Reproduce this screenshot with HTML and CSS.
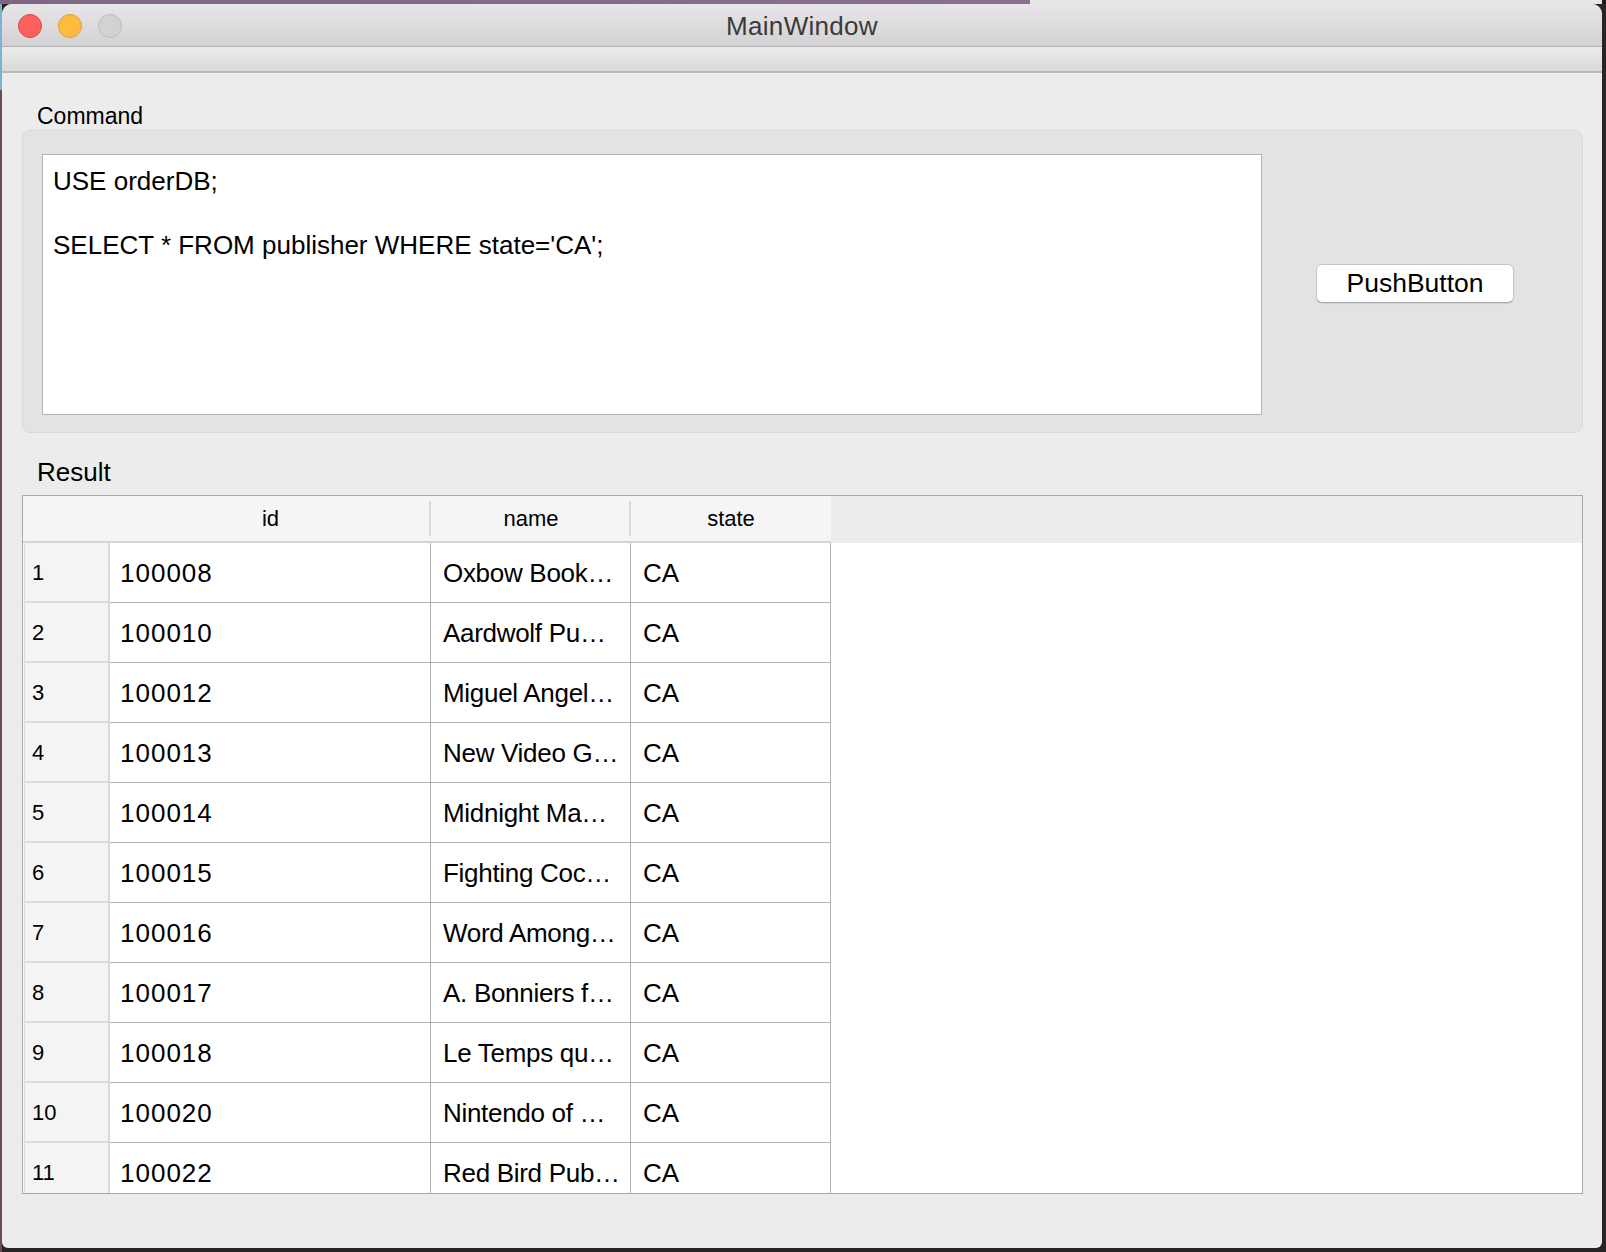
FILE: index.html
```html
<!DOCTYPE html>
<html lang="en">
<head>
<meta charset="utf-8">
<title>MainWindow</title>
<link rel="stylesheet" href="styles.css">
</head>
<body>
<div class="window">
  <div class="titlebar">
    <div class="lights">
      <span class="light red"></span>
      <span class="light yellow"></span>
      <span class="light gray"></span>
    </div>
    <div class="title">MainWindow</div>
    <div></div>
  </div>
  <div class="toolbar"></div>
  <div class="content">
    <div class="label label-command">Command</div>
    <div class="groupbox">
      <div class="editor">USE orderDB;

SELECT * FROM publisher WHERE state='CA';</div>
      <div class="btn-wrap"><button class="pushbutton">PushButton</button></div>
    </div>
    <div class="label label-result">Result</div>
    <div class="table">
      <div class="thead">
        <div class="hcorner"></div>
        <div class="hcell c-id">id</div>
        <div class="hcell c-name">name</div>
        <div class="hcell c-state">state</div>
        <div class="hfill"></div>
      </div>
      <div class="tbody">
        <div class="row"><div class="rnum">1</div><div class="cell c-id">100008</div><div class="cell c-name">Oxbow Book…</div><div class="cell c-state">CA</div></div>
        <div class="row"><div class="rnum">2</div><div class="cell c-id">100010</div><div class="cell c-name">Aardwolf Pu…</div><div class="cell c-state">CA</div></div>
        <div class="row"><div class="rnum">3</div><div class="cell c-id">100012</div><div class="cell c-name">Miguel Angel…</div><div class="cell c-state">CA</div></div>
        <div class="row"><div class="rnum">4</div><div class="cell c-id">100013</div><div class="cell c-name">New Video G…</div><div class="cell c-state">CA</div></div>
        <div class="row"><div class="rnum">5</div><div class="cell c-id">100014</div><div class="cell c-name">Midnight Ma…</div><div class="cell c-state">CA</div></div>
        <div class="row"><div class="rnum">6</div><div class="cell c-id">100015</div><div class="cell c-name">Fighting Coc…</div><div class="cell c-state">CA</div></div>
        <div class="row"><div class="rnum">7</div><div class="cell c-id">100016</div><div class="cell c-name">Word Among…</div><div class="cell c-state">CA</div></div>
        <div class="row"><div class="rnum">8</div><div class="cell c-id">100017</div><div class="cell c-name">A. Bonniers f…</div><div class="cell c-state">CA</div></div>
        <div class="row"><div class="rnum">9</div><div class="cell c-id">100018</div><div class="cell c-name">Le Temps qu…</div><div class="cell c-state">CA</div></div>
        <div class="row"><div class="rnum">10</div><div class="cell c-id">100020</div><div class="cell c-name">Nintendo of …</div><div class="cell c-state">CA</div></div>
        <div class="row"><div class="rnum">11</div><div class="cell c-id">100022</div><div class="cell c-name">Red Bird Pub…</div><div class="cell c-state">CA</div></div>
      </div>
    </div>
  </div>
</div>
</body>
</html>
```
FILE: styles.css
```css
* { box-sizing: border-box; }

html, body {
  margin: 0;
  height: 1252px;
  overflow: hidden;
}

body {
  padding: 4px 4px 4px 2px;
  font-family: "Liberation Sans", Arial, sans-serif;
  color: #000;
  background:
    linear-gradient(to right, #7d6784 0, #8a6f8e 1030px, #e6e6e6 1030px, #e6e6e6 1602px, #1c1b18 1602px) top left / 100% 4px no-repeat,
    linear-gradient(to bottom, #7ab4d2 0, #7ab4d2 90px, #6a4b5a 90px) top left / 2px 100% no-repeat,
    #2a2326;
}

.window {
  width: 1600px;
  height: 1244px;
  background: #ececec;
  border-radius: 10px 10px 6px 6px;
  overflow: hidden;
  display: flex;
  flex-direction: column;
}

.titlebar {
  height: 43px;
  flex: none;
  display: grid;
  grid-template-columns: 1fr auto 1fr;
  align-items: center;
  padding-top: 2px;
  background: linear-gradient(to bottom, #e8e6e8, #d3d1d3);
  border-bottom: 1px solid #b3b3b3;
}

.lights {
  display: flex;
  gap: 16px;
  padding-left: 16px;
}

.light {
  width: 24px;
  height: 24px;
  border-radius: 50%;
  display: block;
}
.light.red { background: #fc615d; border: 1px solid #df4744; }
.light.yellow { background: #fdbc40; border: 1px solid #de9f34; }
.light.gray { background: #d2d2d2; border: 1px solid #bcbcbc; }

.title {
  font-size: 26px;
  letter-spacing: 0.3px;
  color: #3a3a3a;
  line-height: 30px;
}

.toolbar {
  height: 26px;
  flex: none;
  background: linear-gradient(to bottom, #ebebeb, #d9d9d9);
  border-bottom: 2px solid #b9b9b9;
}

.content {
  flex: 1;
  padding: 29px 19px 0 20px;
}

.label {
  padding-left: 15px;
}
.label-command {
  font-size: 23px;
  line-height: 28px;
  height: 28px;
}
.label-result {
  font-size: 26px;
  line-height: 30px;
  margin-top: 24px;
  margin-bottom: 8px;
}

.groupbox {
  height: 303px;
  background: #e3e3e3;
  border: 1px solid #d9d9d9;
  border-radius: 8px;
  padding: 23px 0 17px 19px;
  display: flex;
  align-items: stretch;
}

.editor {
  width: 1220px;
  height: 261px;
  background: #fff;
  border: 1px solid #b3b3b3;
  padding: 10px 10px;
  font-size: 26px;
  line-height: 32px;
  white-space: pre;
}

.btn-wrap {
  flex: 1;
  display: flex;
  align-items: center;
  padding-left: 54px;
  padding-bottom: 3px;
}

.pushbutton {
  width: 198px;
  height: 39px;
  background: #fff;
  border: 1px solid #c4c4c4;
  border-bottom-color: #a9a9a9;
  border-radius: 6px;
  box-shadow: 0 1px 1px rgba(0,0,0,0.08);
  font-family: "Liberation Sans", Arial, sans-serif;
  font-size: 26.5px;
  color: #000;
  padding: 0;
  line-height: 36px;
}

.table {
  height: 699px;
  border: 1px solid #a9a9a9;
  background: #fff;
  overflow: hidden;
}

.thead {
  display: flex;
  height: 47px;
}

.hcorner, .hcell {
  background: #f5f5f5;
  border-bottom: 2px solid #d4d4d4;
}
.hcorner { width: 87px; }

.hcell {
  position: relative;
  font-size: 22px;
  line-height: 46px;
  text-align: center;
}
.hcell::after {
  content: "";
  position: absolute;
  right: 0;
  top: 5px;
  bottom: 5px;
  width: 2px;
  background: #dadada;
}
.hcell.c-state::after { display: none; }
.hfill { flex: 1; background: #ececec; }

.c-id { width: 321px; }
.c-name { width: 200px; }
.c-state { width: 200px; }

.row {
  display: flex;
  height: 60px;
}

.rnum {
  width: 87px;
  background: #f4f4f4;
  border-left: 1px solid #f9f9f9;
  border-right: 2px solid #dadada;
  border-bottom: 2px solid #dcdcdc;
  box-shadow: inset 1px 0 0 #dadada;
  font-size: 22px;
  line-height: 60px;
  padding-left: 8px;
}

.cell {
  background: #fff;
  border-right: 1px solid #b3b3b3;
  border-bottom: 1px solid #b3b3b3;
  font-size: 26px;
  line-height: 60px;
  padding-left: 12px;
  white-space: nowrap;
  overflow: hidden;
}
.cell.c-id { padding-left: 10px; letter-spacing: 1px; }
.cell.c-name { letter-spacing: -0.3px; }
```
